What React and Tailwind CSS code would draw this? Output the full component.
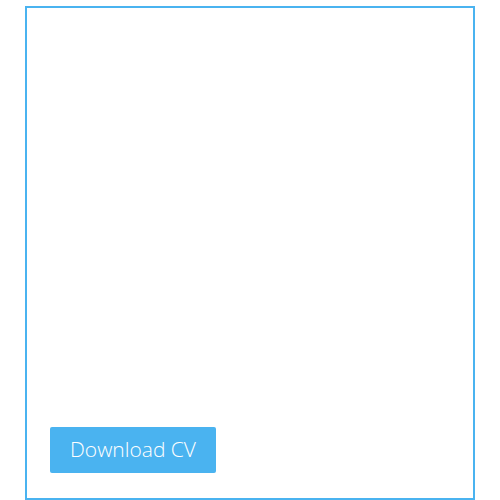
export default function App() {
  return (
    <div className="w-[500px] h-[500px] bg-white overflow-hidden">
      <div className="ml-[25px] mt-[6px] w-[450px] h-[494px] border-2 border-[#4ab3f0] flex flex-col justify-start pl-[23px] pt-[419px]">
        <button
          className="w-[166px] h-[46px] rounded-[2px] bg-[#4ab3f0] text-white text-[21px] font-light flex items-center justify-center"
          style={{ fontFamily: '"Open Sans", sans-serif' }}
        >
          Download CV
        </button>
      </div>
    </div>
  );
}
